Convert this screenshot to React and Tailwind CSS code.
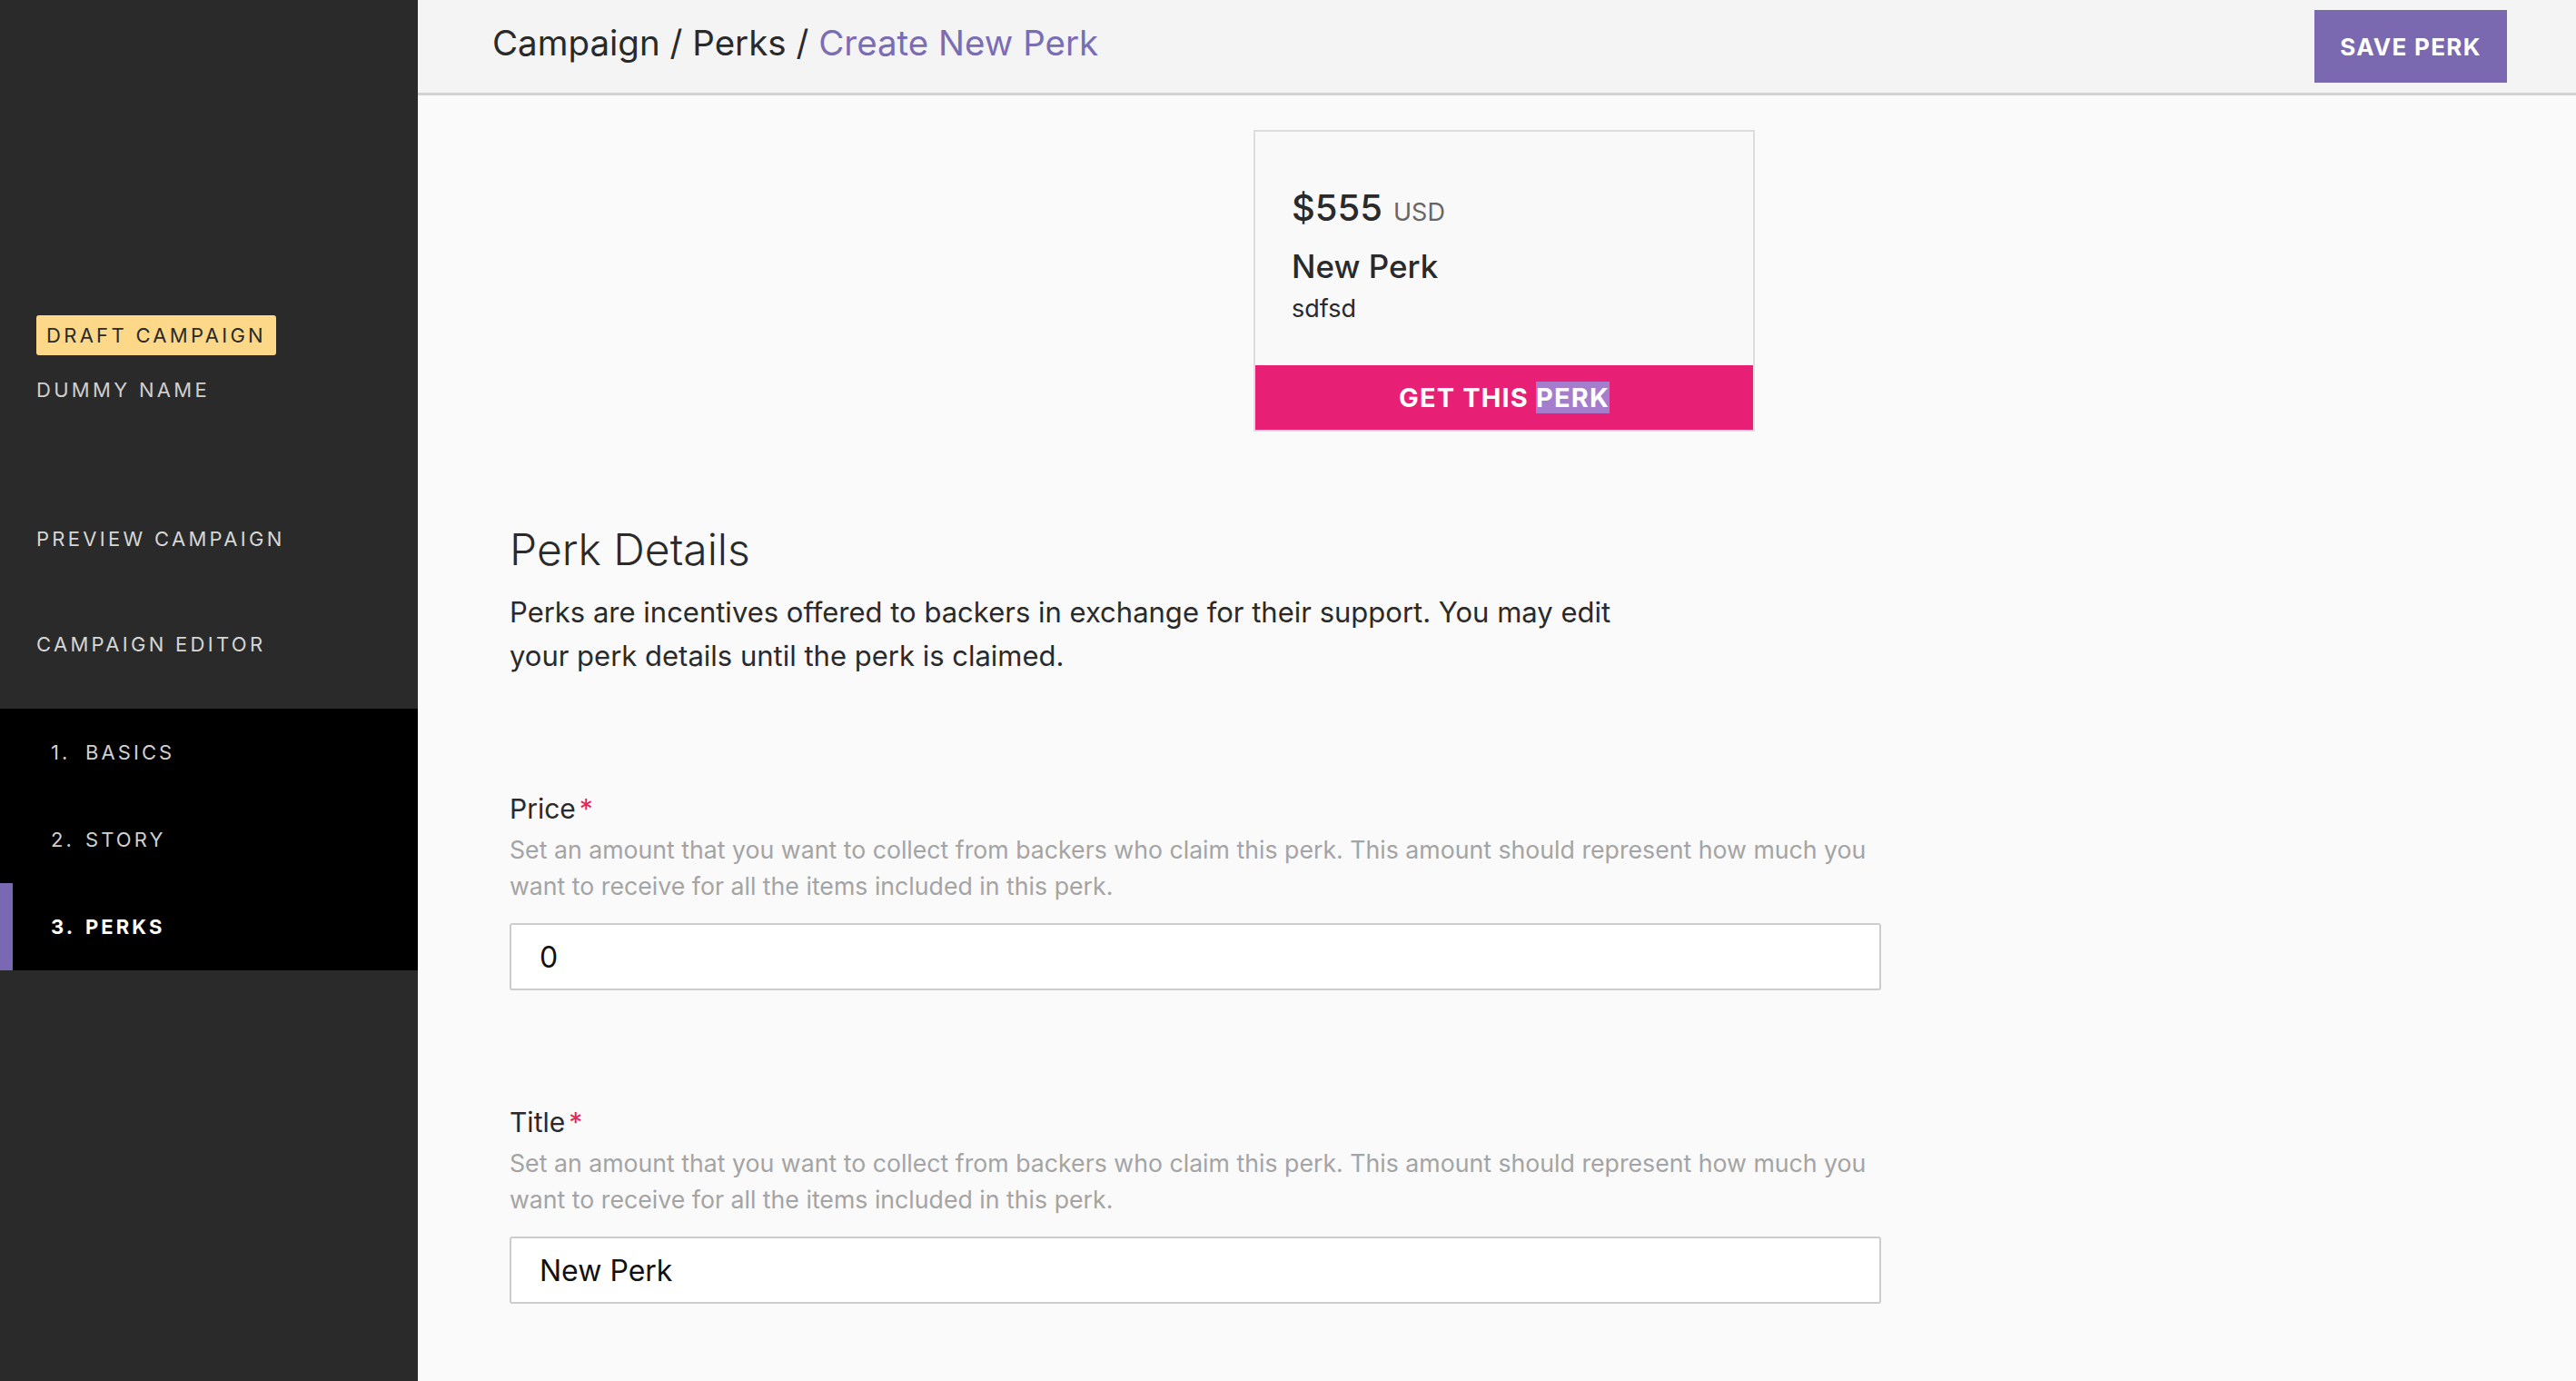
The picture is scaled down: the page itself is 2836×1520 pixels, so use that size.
// App.jsx – Create New Perk page (campaign editor)

import React from "react";

const sans = "font-['Inter','Liberation_Sans',sans-serif]";

function SideNav() {
  const steps = [
    { n: "1.", label: "BASICS" },
    { n: "2.", label: "STORY" },
    { n: "3.", label: "PERKS", active: true },
  ];

  return (
    <aside className="w-[460px] shrink-0 min-h-screen bg-[#2a2a2a] flex flex-col pt-[347px]">
      <div className="px-[40px] text-[22px] leading-[30px] tracking-[0.15em]">
        <span className="inline-flex items-center h-[44px] px-[11px] rounded-[3px] bg-[#fdd888] text-[#2a2a2a]">
          DRAFT CAMPAIGN
        </span>
        <div className="mt-[23px] text-[#cfcfcf]">DUMMY NAME</div>
        <div className="mt-[134px] text-[#d6d6d6]">PREVIEW CAMPAIGN</div>
        <div className="mt-[86px] text-[#d6d6d6]">CAMPAIGN EDITOR</div>
      </div>

      <nav className="mt-[56px] bg-black">
        {steps.map((s) => (
          <div key={s.label} className="relative h-[96px] flex items-center pl-[56px] text-[22px] tracking-[0.14em]">
            {s.active && <span className="absolute left-0 top-0 h-full w-[14px] bg-[#7b68b5]" />}
            <span className={`w-[38px] ${s.active ? "text-white font-bold" : "text-[#d0d0d0]"}`}>{s.n}</span>
            <span className={s.active ? "text-white font-bold" : "text-[#d0d0d0]"}>{s.label}</span>
          </div>
        ))}
      </nav>
    </aside>
  );
}

function Field({ label, help, value }) {
  return (
    <div className="mb-[125px]">
      <div className="text-[30px] leading-[40px] text-[#2a2a2a]">
        {label}
        <span className="text-[#e5265b] ml-[4px]">*</span>
      </div>
      <p className="mt-[5px] text-[26.7px] leading-[40px] text-[#a4a4a4]">{help}</p>
      <input
        readOnly
        value={value}
        className="mt-[21px] w-full h-[74px] px-[31px] bg-white border-2 border-[#cccccc] rounded-[3px] text-[32px] text-[#111] outline-none"
      />
    </div>
  );
}

export default function App() {
  const help =
    "Set an amount that you want to collect from backers who claim this perk. This amount should represent how much you want to receive for all the items included in this perk.";

  return (
    <div className={`flex min-h-screen bg-[#fafafa] ${sans}`}>
      <SideNav />

      <main className="flex-1 min-w-0">
        <header className="h-[105px] bg-[#f4f4f4] border-b-[3px] border-[#d2d2d2] flex items-center justify-between pl-[82px] pr-[76px]">
          <h1 className="text-[38.5px] text-[#2a2a2a] pb-[7px]">
            Campaign / Perks / <span className="text-[#7b6db3]">Create New Perk</span>
          </h1>
          <button className="h-[80px] w-[212px] bg-[#7a68b0] text-white font-bold text-[26px] tracking-[0.05em]">
            SAVE PERK
          </button>
        </header>

        <div className="flex justify-center pl-[16px] mt-[38px]">
          <div className="w-[552px] h-[332px] border-2 border-[#dddddd] bg-[#f9f9f9] flex flex-col">
            <div className="flex-1 pl-[40px] pt-[60px] text-[#2a2a2a]">
              <div className="flex items-baseline leading-[47px]">
                <span className="text-[40px] font-medium">$555</span>
                <span className="ml-[12px] text-[27px] text-[#666]">USD</span>
              </div>
              <div className="mt-[16px] text-[35px] leading-[40px] font-medium">New Perk</div>
              <div className="mt-[9px] text-[27px] leading-[36px]">sdfsd</div>
            </div>
            <button className="h-[71px] bg-[#e71f75] text-white font-bold text-[29px] tracking-[0.04em]">
              GET THIS <span className="bg-[#a47dcd]">PERK</span>
            </button>
          </div>
        </div>

        <section className="pl-[101px] mt-[102px]">
          <h2 className="text-[48px] leading-[56px] font-light text-[#2a2a2a]">Perk Details</h2>
          <p className="mt-[17px] max-w-[1240px] text-[31px] leading-[48px] text-[#2a2a2a]">
            Perks are incentives offered to backers in exchange for their support. You may edit your perk details until the perk is claimed.
          </p>

          <div className="w-[1510px] mt-[124px]">
            <Field label="Price" help={help} value="0" />
            <Field label="Title" help={help} value="New Perk" />
          </div>
        </section>
      </main>
    </div>
  );
}
